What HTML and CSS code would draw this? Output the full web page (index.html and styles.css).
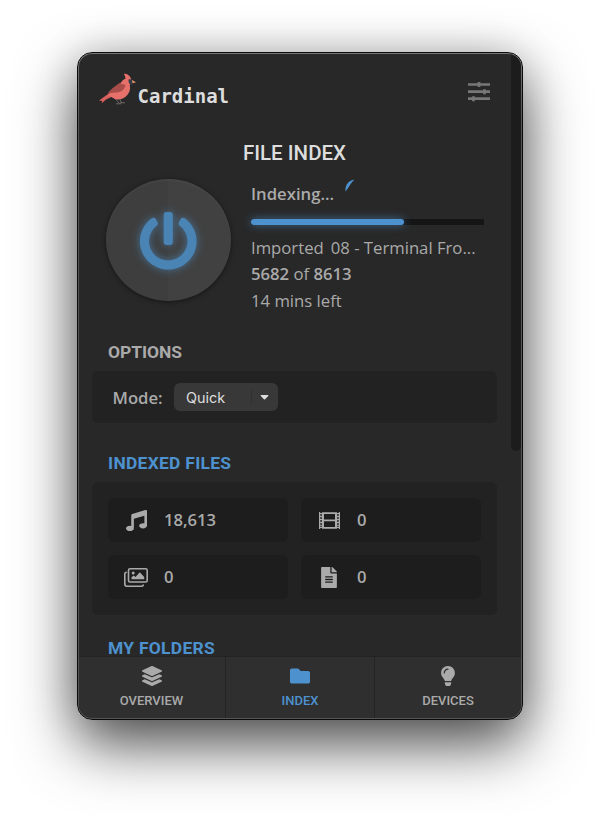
FILE: index.html
```html
<!DOCTYPE html>
<html lang="en">
<head>
<meta charset="utf-8">
<title>Cardinal</title>
<link rel="stylesheet" href="styles.css">
</head>
<body>
<main class="window">
  <div class="viewport">
    <div class="content">
      <header class="header">
        <div class="brand">
          <svg class="bird" viewBox="0 0 38 33">
            <path fill="#d9605c" d="M0 27.500 10.500 20l4 3-7.500 3.500L2.500 30.500l.8-2.500z"/>
            <path fill="#e8706b" d="M25 .8c3.500 0 6.300 2 7 5.200l.5 3.500-1.800 2.500c.8 3.500.3 6.500-2 9.500-3 3.800-6.500 5.500-12 5L9 22 22 9.500c1.200-2 2.800-3.200 4.500-3.800-.1-1.700-.8-3.400-1.500-4.900z"/>
            <path fill="#a94d4b" d="M8.500 20.500c3-4.500 8-7.500 12-10.500 2 1.200 4.500 1.700 6 1.200-.5 5-4 8.300-10 8.300z"/>
            <path fill="#343b42" d="M29.500 6.500c2-.8 3.800.2 4.200 1.500l-.5 3.500c-2 .8-4-1-3.700-5z"/>
            <path fill="#e99a6b" d="m33 7 4 2.200-3.500 1z"/>
            <path fill="none" stroke="#74716e" stroke-width=".9" d="m17 26.500 3.500 4M20.500 26l2.500 4m-6 .800h5m-1-1h5"/>
          </svg>
          <span class="wordmark">Cardinal</span>
        </div>
        <svg class="sliders" viewBox="0 0 24 20">
          <path d="M1 2.500h22M1 9.700h22M1 16.700h22" stroke-width="2.700"/>
          <path d="M12 0v5M17.500 7.200v5M6.500 14.200v5" stroke-width="2.700"/>
        </svg>
      </header>
      <h1 class="title">FILE INDEX</h1>
      <section class="status">
        <button class="power" aria-label="Power">
          <svg viewBox="0 0 512 512"><path d="M400 54.100c63 45 104 118.600 104 201.900 0 136.800-110.800 247.700-247.500 248C120 504.300 8.200 393 8 256.400 7.900 173.100 48.900 99.300 111.800 54.200c11.700-8.300 28-4.800 35 7.700L162.600 90c5.900 10.500 3.100 23.800-6.600 31-41.500 30.800-68 79.600-68 134.900-.1 92.300 74.500 168.100 168 168.100 91.600 0 168.600-74.200 168-169.100-.3-51.800-24.700-101.800-68.100-134-9.700-7.200-12.400-20.500-6.500-30.900l15.800-28.100c7-12.400 23.200-16.100 34.800-7.800zM296 264V24c0-13.300-10.700-24-24-24h-32c-13.300 0-24 10.700-24 24v240c0 13.300 10.700 24 24 24h32c13.300 0 24-10.700 24-24z"/></svg>
        </button>
        <div class="progress">
          <div class="state"><span>Indexing...</span>
            <svg class="spinner" viewBox="0 0 10 13"><path d="M.5 12.500C-.2 6.500 3.500 1.500 9.500.5 6 3.500 4 8 .5 12.500z"/></svg>
          </div>
          <div class="track"><div class="fill"></div></div>
          <div class="line imported"><span>Imported</span><span class="filename">08 - Terminal Fro...</span></div>
          <div class="line count"><b>5682</b> of <b>8613</b></div>
          <div class="line left">14 mins left</div>
        </div>
      </section>
      <h2 class="heading">OPTIONS</h2>
      <section class="panel options">
        <span class="label">Mode:</span>
        <div class="select"><span class="value">Quick</span><span class="arrow"><svg viewBox="0 0 8 5"><path d="M.6 0h6.800q.9.200.3 1L4.600 4.300q-.6.600-1.200 0L.3 1Q-.3.200.6 0z"/></svg></span></div>
      </section>
      <h2 class="heading blue files-heading">INDEXED FILES</h2>
      <section class="panel files">
        <div class="tile">
          <svg class="music" viewBox="0 0 512 512"><path d="M470.380 1.510L150.410 96A32 32 0 0 0 128 126.510v261.410A139 139 0 0 0 96 384c-53 0-96 28.660-96 64s43 64 96 64 96-28.660 96-64V214.320l256-75v184.610a138.400 138.400 0 0 0-32-3.930c-53 0-96 28.660-96 64s43 64 96 64 96-28.650 96-64V32a32 32 0 0 0-41.620-30.490z"/></svg>
          <span>18,613</span>
        </div>
        <div class="tile">
          <svg class="film" viewBox="0 0 21 17"><path fill-rule="evenodd" d="M0 0h1.200v1H3V.3h15V1h1.800V0H21v17h-1.200v-1H18v.7H3V16H1.200v1H0zm1.200 2.200v1.600H3V2.200zm0 3v1.600H3V5.200zm0 3v1.600H3V8.200zm0 3v1.600H3v-1.600zm0 2.600v1H3v-1zm16.800-11.600v1.600h1.800V2.200zm0 3v1.600h1.800V5.200zm0 3v1.600h1.800V8.200zm0 3v1.600h1.800v-1.600zm0 2.600v1h1.800v-1zM5 2v5.600h11V2zm0 7.200v5.800h11V9.200z"/></svg>
          <span>0</span>
        </div>
        <div class="tile">
          <svg class="images" viewBox="0 0 24 19"><path fill="none" stroke="#aaa" stroke-width="1.600" d="M6.100.8h15.500q1.600 0 1.600 1.600v10q0 1.600-1.600 1.600H6.100q-1.600 0-1.600-1.600v-10Q4.500.8 6.100.8zM2.800 4.300Q.8 4.300.8 6v9.800q0 2.400 2 2.400h14.500q2 0 2-1.700"/><circle cx="9.200" cy="5" r="1.500"/><path d="M7.500 11.200V9.300l2.200-1.800 1.800 1.400 4.300-4.600 4.400 4.600v2.300z"/></svg>
          <span>0</span>
        </div>
        <div class="tile">
          <svg class="doc" viewBox="0 0 384 512"><path d="M224 136V0H24C10.700 0 0 10.700 0 24v464c0 13.300 10.700 24 24 24h336c13.300 0 24-10.700 24-24V160H248c-13.200 0-24-10.800-24-24zm64 236c0 6.600-5.400 12-12 12H108c-6.600 0-12-5.400-12-12v-8c0-6.600 5.400-12 12-12h168c6.600 0 12 5.400 12 12v8zm0-64c0 6.600-5.400 12-12 12H108c-6.600 0-12-5.400-12-12v-8c0-6.600 5.400-12 12-12h168c6.600 0 12 5.400 12 12v8zm0-72v8c0 6.600-5.400 12-12 12H108c-6.600 0-12-5.400-12-12v-8c0-6.600 5.400-12 12-12h168c6.600 0 12 5.400 12 12zm96-114.100v6.100H256V0h6.100c6.400 0 12.500 2.500 17 7l97.900 98c4.500 4.500 7 10.600 7 16.900z"/></svg>
          <span>0</span>
        </div>
      </section>
      <h2 class="heading blue folders-heading">MY FOLDERS</h2>
    </div>
    <div class="scrollbar"></div>
  </div>
  <nav class="tabs">
    <a class="tab">
      <svg viewBox="0 0 512 512"><path d="M12.410 148.020l232.940 105.670c6.800 3.090 14.490 3.090 21.290 0l232.940-105.670c16.550-7.510 16.550-32.520 0-40.030L266.650 2.310a25.607 25.607 0 0 0-21.290 0L12.410 107.980c-16.550 7.510-16.550 32.530 0 40.040zm487.180 88.280l-58.090-26.330-161.640 73.270c-7.560 3.430-15.590 5.170-23.860 5.170s-16.290-1.740-23.860-5.170L70.510 209.970l-58.100 26.330c-16.550 7.500-16.550 32.500 0 40l232.940 105.590c6.800 3.080 14.490 3.080 21.290 0L499.590 276.300c16.550-7.500 16.550-32.500 0-40zm0 127.800l-57.870-26.230-161.860 73.370c-7.560 3.430-15.590 5.170-23.860 5.170s-16.290-1.740-23.860-5.170L70.290 337.870 12.410 364.100c-16.550 7.500-16.550 32.500 0 40l232.940 105.590c6.800 3.080 14.490 3.080 21.290 0L499.590 404.100c16.550-7.500 16.550-32.500 0-40z"/></svg>
      <span>OVERVIEW</span>
    </a>
    <a class="tab active">
      <svg viewBox="0 0 512 512"><path d="M464 128H272l-54.600-54.600A32 32 0 0 0 194.700 64H48C21.500 64 0 85.500 0 112v288c0 26.500 21.500 48 48 48h416c26.500 0 48-21.500 48-48V176c0-26.500-21.500-48-48-48z"/></svg>
      <span>INDEX</span>
    </a>
    <a class="tab">
      <svg viewBox="0 0 352 512"><path d="M96.060 454.350c.01 6.290 1.870 12.450 5.360 17.690l17.090 25.690a31.990 31.990 0 0 0 26.640 14.280h61.710a31.990 31.990 0 0 0 26.640-14.280l17.090-25.690a31.989 31.989 0 0 0 5.360-17.690l.04-38.350H96.010l.05 38.350zM0 176c0 44.370 16.450 84.850 43.560 115.780 16.520 18.850 42.360 58.230 52.210 91.450.04.26.07.52.11.78h160.240c.04-.26.07-.51.11-.78 9.850-33.220 35.690-72.600 52.210-91.450C335.550 260.850 352 220.370 352 176 352 78.610 272.910-.3 175.450 0 73.440.31 0 82.970 0 176zm176-80c-44.110 0-80 35.890-80 80 0 8.840-7.160 16-16 16s-16-7.160-16-16c0-61.760 50.240-112 112-112 8.840 0 16 7.160 16 16s-7.160 16-16 16z"/></svg>
      <span>DEVICES</span>
    </a>
  </nav>
</main>
</body>
</html>
```
FILE: styles.css
```css
* { box-sizing: border-box; }
html, body { height: 100%; }
body {
  margin: 0;
  padding: 52px 77px 0;
  background: #fff;
  overflow: hidden;
  font-family: "Open Sans", sans-serif;
  color: #aaa;
}
svg { display: block; fill: currentColor; flex: none; }

.window {
  display: flex;
  flex-direction: column;
  width: 446px;
  height: 668px;
  padding: 1px;
  border: 1px solid #0b0b0b;
  border-radius: 15px;
  background: linear-gradient(#777, #555 10%, #555);
  box-shadow: 0 25px 60px rgba(0, 0, 0, .68), 0 0 40px rgba(0, 0, 0, .16);
}
.viewport {
  display: flex;
  flex: 1;
  min-height: 0;
  overflow: hidden;
  border-radius: 13px 13px 0 0;
  background: #282828;
}
.content { width: 432px; padding: 0 14px 0 13px; }
.scrollbar {
  flex: 1;
  height: 397px;
  background: #1c1c1c;
  border-radius: 0 0 6px 6px;
}

.header {
  display: flex;
  justify-content: space-between;
  height: 86px;
  padding: 19px 6px 0 7px;
}
.brand { display: flex; }
.bird { width: 38px; height: 33px; }
.wordmark {
  margin: 11px 0 0 .5px;
  font: bold 19px/24px "DejaVu Sans Mono", monospace;
  color: #ddd;
}
.sliders { width: 24px; height: 20px; margin-top: 9px; stroke: #777; }

.title {
  margin: 0;
  font: 500 20.500px/26px Roboto, sans-serif;
  text-align: center;
  color: #ddd;
}

.status { display: flex; height: 175px; padding: 13px 13px 0 14px; }
.power {
  display: grid;
  place-items: center;
  width: 125px;
  height: 122px;
  padding: 2px 0 0;
  border: 0;
  border-radius: 50%;
  background: linear-gradient(90deg, #3e3e3e 50%, #414141 50%);
  box-shadow: 0 1px 5px rgba(0, 0, 0, .5), inset 0 2px 2px rgba(255, 255, 255, .03);
  color: #4a84b5;
}
.power svg { width: 58.500px; height: 58.500px; overflow: visible; filter: drop-shadow(0 0 4px rgba(74, 144, 203, .65)); }
.progress { width: 233px; margin-left: 20px; }
.state {
  display: flex;
  gap: 11px;
  height: 40px;
  font-size: 16.700px;
  font-weight: 600;
  line-height: 29px;
}
.spinner { width: 10px; height: 13px; color: #4d92cf; }
.track { height: 6px; background: #151515; }
.fill {
  width: 153px;
  height: 6px;
  border-radius: 3px;
  background: #4d92cf;
  box-shadow: 0 0 8px rgba(77, 146, 207, .65);
}
.line { height: 26.500px; font-size: 16.700px; line-height: 26.500px; white-space: nowrap; }
.line b { font-weight: 600; }
.imported { display: flex; gap: 7px; margin-top: 9.500px; }

.heading {
  margin: 0;
  padding-left: 16px;
  font: bold 17.400px/22px Roboto, sans-serif;
}
.blue { color: #4d92cf; letter-spacing: .3px; }
.panel { background: #222; border-radius: 6px; }
.options {
  display: flex;
  align-items: center;
  height: 52px;
  margin-top: 8px;
  padding-left: 20.500px;
}
.label { width: 61.500px; font-size: 16.700px; font-weight: 600; }
.select {
  display: flex;
  align-items: center;
  width: 104px;
  height: 28px;
  padding-left: 12px;
  border-radius: 6px;
  background: #383838;
  color: #ddd;
  font: 14.400px/28px Inter, sans-serif;
}
.value { width: 65px; padding-top: 1px; }
.arrow { display: grid; place-items: center; width: 25px; height: 14px; border-left: 1px solid #303030; }
.arrow svg { width: 9px; height: 5px; }

.files-heading { margin-top: 29px; }
.files {
  display: grid;
  grid-template-columns: 180px 180px;
  grid-auto-rows: 44px;
  gap: 13px 13px;
  height: 133px;
  margin-top: 8px;
  padding: 16px;
}
.tile {
  display: grid;
  grid-template-columns: 24px 1fr;
  align-items: center;
  justify-items: center;
  column-gap: 16px;
  padding-left: 16px;
  border-radius: 6px;
  background: #1d1d1d;
  font-size: 16.600px;
  font-weight: 600;
}
.tile span { justify-self: start; margin-top: -1px; }
.music { width: 21px; height: 21px; }
.film { width: 21px; height: 17px; }
.images { width: 24px; height: 19px; }
.doc { width: 16px; height: 21px; }
.folders-heading { margin-top: 22px; }

.tabs {
  display: grid;
  grid-template-columns: 146px 149px 1fr;
  height: 61px;
  overflow: hidden;
  border-radius: 0 0 13px 13px;
  background: #2f2f2f;
  box-shadow: 0 -1px #232323;
}
.tab {
  display: flex;
  flex-direction: column;
  align-items: center;
  gap: 7px;
  padding-top: 9px;
  font: 500 13px/16px Roboto, sans-serif;
}
.tab:first-child { padding-right: 1px; }
.tab + .tab { border-left: 1px solid #242424; }
.tab svg { width: 20px; height: 20px; }
.active { color: #4d92cf; }
```
